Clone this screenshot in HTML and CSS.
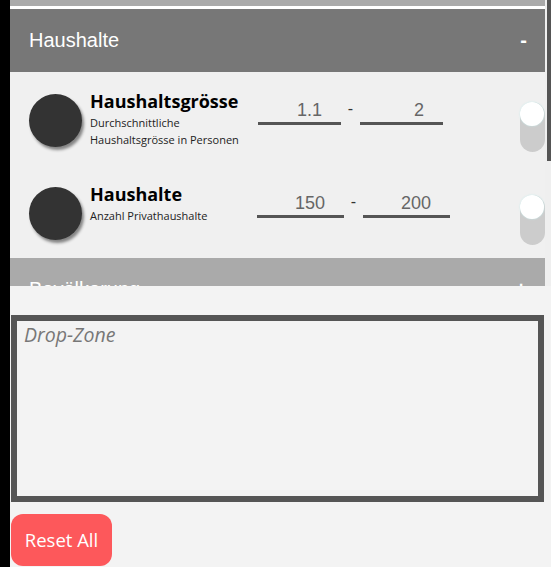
FILE: index.html
```html
<!DOCTYPE html>
<html lang="de">
<head>
<meta charset="utf-8">
<title>Filter</title>
<link rel="stylesheet" href="styles.css">
</head>
<body>
<div class="app">
  <div class="rail"></div>
  <main class="main">
    <div class="panel">
      <div class="panel-scroll">
        <div class="strip"></div>
        <section class="group">
          <header class="group-head"><span>Haushalte</span><span class="group-sign">-</span></header>
          <div class="row">
            <div class="avatar"></div>
            <div class="info">
              <div class="title">Haushaltsgrösse</div>
              <div class="desc">Durchschnittliche Haushaltsgrösse in Personen</div>
            </div>
            <div class="range">
              <input class="num" type="text" value="1.1">
              <span class="dash">-</span>
              <input class="num" type="text" value="2">
            </div>
            <div class="switch"><span class="knob"></span></div>
          </div>
          <div class="row">
            <div class="avatar"></div>
            <div class="info">
              <div class="title">Haushalte</div>
              <div class="desc">Anzahl Privathaushalte</div>
            </div>
            <div class="range range-wide">
              <input class="num" type="text" value="150">
              <span class="dash">-</span>
              <input class="num" type="text" value="200">
            </div>
            <div class="switch"><span class="knob"></span></div>
          </div>
        </section>
        <section class="group">
          <header class="group-head group-head-closed"><span>Bevölkerung</span><span class="group-sign">+</span></header>
        </section>
      </div>
      <div class="scrollbar"><div class="thumb"></div></div>
    </div>
    <div class="dropzone"><span class="drop-label">Drop-Zone</span></div>
    <button class="reset" type="button">Reset All</button>
  </main>
</div>
</body>
</html>
```
FILE: styles.css
```css
* { box-sizing: border-box; }
html, body { margin: 0; padding: 0; }
body { background: #f3f3f3; font-family: "Liberation Sans", Arial, sans-serif; }
.app { display: flex; height: 567px; overflow: hidden; }
.rail { width: 10px; flex: none; background: #000; }
.main { flex: 1; display: flex; flex-direction: column; align-items: flex-start; background: #f3f3f3; }

.panel { display: flex; height: 286px; width: 100%; overflow: hidden; flex: none; }
.panel-scroll { flex: 1; overflow: hidden; }
.scrollbar { width: 6px; flex: none; background: #efefef; display: flex; justify-content: flex-end; }
.thumb { width: 4px; height: 161px; background: #555; }

.strip { height: 9px; background: #aaa; border-bottom: 3px solid #fff; }
.group-head { height: 63px; background: #777; color: #fff; font-size: 20px; display: flex; align-items: center; justify-content: space-between; padding: 0 18px 0 19px; }
.group-head-closed { background: #aaa; }
.group-sign { font-weight: bold; }

.row { height: 93px; background: #f0f0f0; display: flex; align-items: flex-start; padding-top: 17px; padding-left: 19px; }
.avatar { width: 53px; height: 53px; flex: none; border-radius: 50%; background: #333; margin-top: 5px; box-shadow: 2px 3px 3px rgba(0,0,0,0.45); }
.info { width: 160px; flex: none; margin-left: 8px; font-family: "Open Sans", "Noto Sans", sans-serif; color: #111; }
.title { font-size: 18px; font-weight: 700; line-height: 24px; color: #000; }
.desc { font-size: 11px; line-height: 17px; margin-top: 1px; color: #222; }

.range { display: flex; align-items: flex-start; margin-top: 9px; margin-left: 8px; }
.num { width: 83px; height: 27px; border: none; border-bottom: 3px solid #555; background: transparent; font-family: "Liberation Sans", Arial, sans-serif; font-size: 18px; color: #666; text-align: right; padding: 0 19px 0 0; outline: none; }
.range-wide { margin-left: 7px; }
.range-wide .num { width: 87px; }
.dash { width: 19px; text-align: center; font-size: 16px; color: #333; line-height: 22px; }

.switch { margin-left: auto; margin-top: 13px; width: 25px; height: 50px; border-radius: 13px; background: #cccccc; position: relative; flex: none; }
.knob { position: absolute; left: 0; top: 0; width: 24px; height: 24px; border-radius: 50%; background: #fff; box-shadow: 0 0 2px rgba(200,240,240,0.9); }

.dropzone { margin-top: 29px; margin-left: 1px; width: 533px; height: 187px; border: 6px solid #555; padding: 0 0 0 7px; background: #f3f3f3; flex: none; }
.drop-label { font-family: "Open Sans", "Noto Sans", sans-serif; font-style: italic; font-size: 19.5px; color: #777; }

.reset { margin-top: 12px; margin-left: 1px; width: 101px; height: 52px; border: none; border-radius: 12px; background: #fd585b; color: #fff; font-family: "Open Sans", "Noto Sans", sans-serif; font-size: 18.5px; padding: 0 0 2px 0; flex: none; }
```
